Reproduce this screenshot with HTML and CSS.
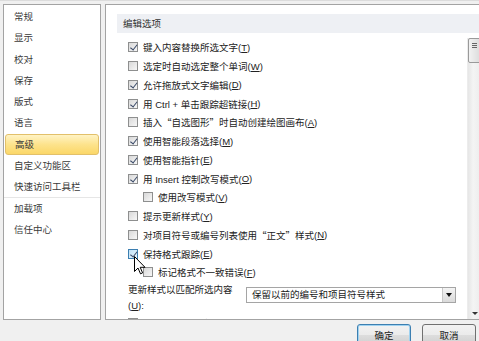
FILE: index.html
```html
<html lang="zh-CN">
<head>
    <meta charset="UTF-8">
    <title>Word 选项 - 高级</title>
    <link rel="stylesheet" href="styles.css">
</head>
<body>
    <div class="dialog">
        <div class="panes">
            <ul class="nav">
                <li>常规</li>
                <li>显示</li>
                <li>校对</li>
                <li>保存</li>
                <li>版式</li>
                <li>语言</li>
                <li class="active">高级</li>
                <li>自定义功能区</li>
                <li class="sep">快速访问工具栏</li>
                <li>加载项</li>
                <li>信任中心</li>
            </ul>

            <div class="main">
                <div class="section">编辑选项</div>
                <div class="body">
                    <div class="options">
                        <div class="opt"><span class="box on"></span>键入内容替换所选文字(<u>T</u>)</div>
                        <div class="opt"><span class="box"></span>选定时自动选定整个单词(<u>W</u>)</div>
                        <div class="opt"><span class="box on"></span>允许拖放式文字编辑(<u>D</u>)</div>
                        <div class="opt"><span class="box on"></span>用 Ctrl + 单击跟踪超链接(<u>H</u>)</div>
                        <div class="opt"><span class="box"></span>插入<span class="q">“</span>自选图形<span class="q">”</span>时自动创建绘图画布(<u>A</u>)</div>
                        <div class="opt"><span class="box on"></span>使用智能段落选择(<u>M</u>)</div>
                        <div class="opt"><span class="box on"></span>使用智能指针(<u>E</u>)</div>
                        <div class="opt"><span class="box on"></span>用 Insert 控制改写模式(<u>O</u>)</div>
                        <div class="opt sub"><span class="box"></span>使用改写模式(<u>V</u>)</div>
                        <div class="opt"><span class="box"></span>提示更新样式(<u>Y</u>)</div>
                        <div class="opt"><span class="box"></span>对项目符号或编号列表使用<span class="q">“</span>正文<span class="q">”</span>样式(<u>N</u>)</div>
                        <div class="opt"><span class="box on hover"></span>保持格式跟踪(<u>E</u>)</div>
                        <div class="opt sub"><span class="box"></span>标记格式不一致错误(<u>F</u>)</div>
                        <div class="match">
                            <span class="match-label">更新样式以匹配所选内容<br>(<u>U</u>):</span>
                            <div class="select">
                                <span>保留以前的编号和项目符号样式</span>
                                <span class="arrow"></span>
                            </div>
                        </div>
                        <div class="opt"><span class="box on"></span>启用<span class="q">“</span>即点即输<span class="q">”</span>(<u>C</u>)</div>
                    </div>
                    <div class="scrollbar">
                        <div class="thumb"></div>
                        <div class="down"></div>
                    </div>
                </div>
            </div>
        </div>

        <div class="buttons">
            <button class="default">确定</button>
            <button>取消</button>
        </div>
    </div>

    <svg class="cursor" width="12" height="19" viewBox="0 0 12 19">
        <path d="M0.5 0.5 L0.5 15.5 L4 12 L6.5 17.8 L8.6 16.9 L6.2 11.3 L11 11.3 Z" fill="#fff" stroke="#000" stroke-width="1"/>
    </svg>
</body>
</html>
```

FILE: styles.css
```css
body {
    margin: 0;
    width: 479px;
    height: 341px;
    overflow: hidden;
    background: #f0f0f0;
    font-family: "Liberation Sans", "Noto Sans CJK SC", sans-serif;
    font-size: 9.5px;
    color: #222;
    position: relative;
}
.dialog {
    border-top: 1px solid #dcdcdc;
}
.panes {
    display: flex;
    gap: 4px;
    padding: 3px 0 0 3px;
    height: 316px;
}
.nav {
    list-style: none;
    margin: 0;
    padding: 1px 0 0;
    width: 98px;
    height: 316px;
    box-sizing: border-box;
    border: 1px solid #a3a3a3;
    background: #fff;
}
.nav li {
    height: 21.3px;
    line-height: 21.3px;
    padding-left: 10px;
    color: #3a3a3a;
    box-sizing: border-box;
}
.nav li.active {
    margin: 0 1px;
    padding-left: 9px;
    border: 1px solid #e2c06a;
    border-radius: 3px;
    line-height: 19.3px;
    background: linear-gradient(#fff3c4, #fde38c 50%, #fbd768);
}
.nav li.sep {
    border-bottom: 1px solid #e6e6e6;
}
.main {
    flex: 1;
    height: 316px;
    box-sizing: border-box;
    border: 1px solid #a3a3a3;
    margin-right: -3px;
    background: #fff;
    overflow: hidden;
}
.section {
    margin: 9px 0 0 11px;
    height: 19px;
    line-height: 19px;
    padding-left: 6px;
    background: #eef0f4;
    color: #333;
}
.body {
    display: flex;
    margin-top: 5px;
    height: 282px;
}
.options {
    flex: 1;
    padding-left: 22px;
}
.opt {
    display: flex;
    align-items: center;
    height: 18.75px;
    white-space: nowrap;
}
.opt.sub {
    padding-left: 15px;
}
.q {
    font-family: "Noto Sans CJK SC", sans-serif;
}
.box {
    position: relative;
    width: 10px;
    height: 10px;
    margin-right: 5px;
    box-sizing: border-box;
    border: 1px solid #8e8f8f;
    background: linear-gradient(135deg, #d8d8d8, #f7f7f7);
    flex-shrink: 0;
}
.box.on::after {
    content: "";
    position: absolute;
    left: 2.5px;
    top: 0;
    width: 2.5px;
    height: 5.5px;
    border: solid #3a4a68;
    border-width: 0 1.5px 1.5px 0;
    transform: rotate(38deg);
}
.box.hover {
    border-color: #3c7fb1;
    background: linear-gradient(135deg, #bfe0f5, #eaf6fd);
}
.match {
    display: flex;
    align-items: flex-start;
    line-height: 16px;
}
.match-label {
    width: 118px;
    flex-shrink: 0;
}
.select {
    display: flex;
    justify-content: space-between;
    align-items: center;
    margin-top: 5px;
    width: 210px;
    height: 16px;
    box-sizing: border-box;
    border: 1px solid #a5a5a5;
    padding-left: 5px;
    background: #fff;
    color: #1a1a1a;
}
.arrow {
    position: relative;
    width: 13px;
    height: 14px;
    box-sizing: border-box;
    border-left: 1px solid #c8c8c8;
    background: linear-gradient(#f4f4f4, #dadada);
}
.arrow::after {
    content: "";
    position: absolute;
    left: 3px;
    top: 5px;
    border: 3px solid transparent;
    border-top: 4px solid #111;
    border-bottom: none;
}
.scrollbar {
    position: relative;
    width: 13px;
    background: linear-gradient(90deg, #e6e6e6, #f4f4f4 40%, #ececec);
    border-left: 1px solid #ececec;
}
.thumb {
    height: 25px;
    box-sizing: border-box;
    border: 1px solid #9a9a9a;
    border-radius: 2px;
    background:
        linear-gradient(#666, #666) 3px 4px / 5px 1px no-repeat,
        linear-gradient(#666, #666) 3px 6px / 5px 1px no-repeat,
        linear-gradient(#666, #666) 3px 8px / 5px 1px no-repeat,
        linear-gradient(90deg, #f2f2f2, #dcdcdc);
}
.down {
    position: absolute;
    left: 4px;
    bottom: 5px;
    border: 3px solid transparent;
    border-top: 3px solid #333;
    border-bottom: none;
}
.buttons {
    display: flex;
    justify-content: flex-end;
    gap: 11px;
    padding: 4px 3px 0 0;
}
button {
    width: 54px;
    height: 22px;
    border: 1px solid #707070;
    border-radius: 3px;
    background: linear-gradient(#f2f2f2, #ebebeb 50%, #dddddd 51%, #cfcfcf);
    font-family: inherit;
    font-size: 9.5px;
    color: #222;
    padding: 0;
}
button.default {
    border-color: #3c7fb1;
    box-shadow: inset 0 0 0 1px #9fd2f0;
}
.cursor {
    position: absolute;
    left: 134px;
    top: 256px;
}
```
